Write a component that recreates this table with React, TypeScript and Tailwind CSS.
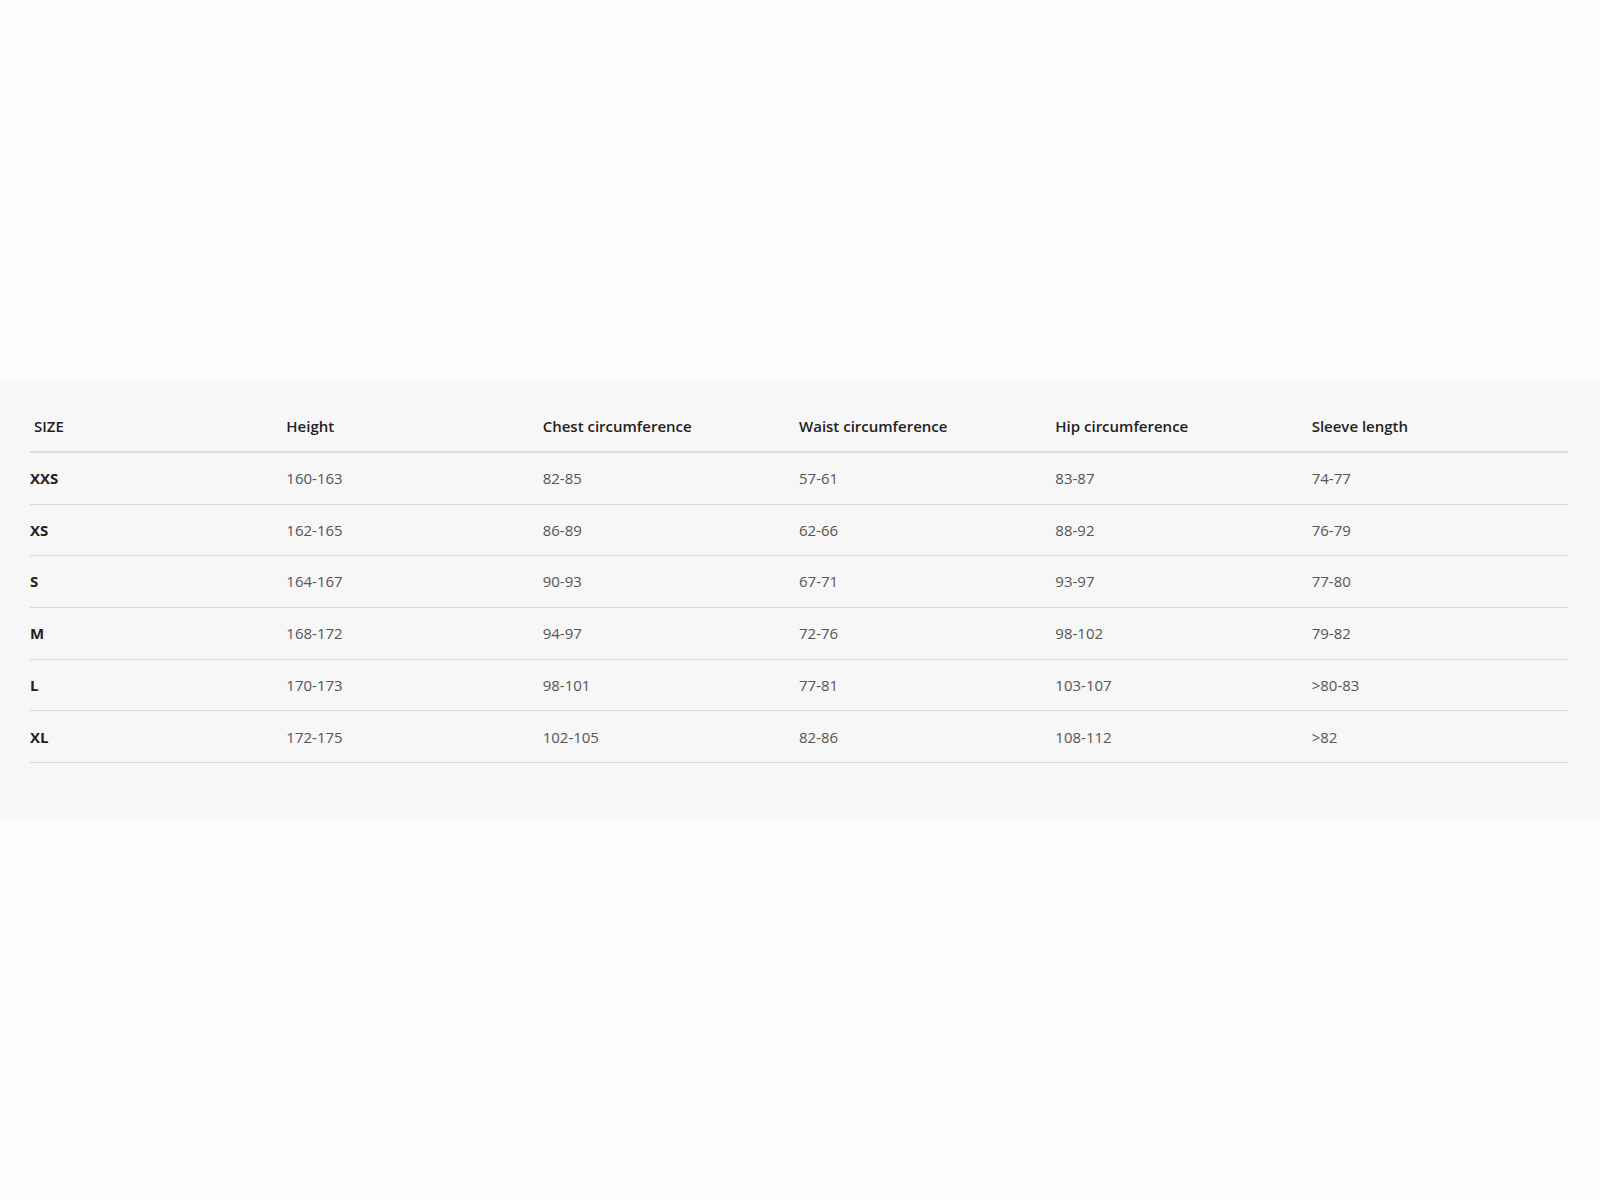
import React from "react";

const headers = ["SIZE", "Height", "Chest circumference", "Waist circumference", "Hip circumference", "Sleeve length"];
const rows = [
  ["XXS", "160-163", "82-85", "57-61", "83-87", "74-77"],
  ["XS", "162-165", "86-89", "62-66", "88-92", "76-79"],
  ["S", "164-167", "90-93", "67-71", "93-97", "77-80"],
  ["M", "168-172", "94-97", "72-76", "98-102", "79-82"],
  ["L", "170-173", "98-101", "77-81", "103-107", ">80-83"],
  ["XL", "172-175", "102-105", "82-86", "108-112", ">82"],
];

export default function App() {
  return (
    <div
      className="min-h-[1200px] w-full bg-[#fdfdfd] pt-[380px]"
      style={{ fontFamily: '"Open Sans", "Liberation Sans", sans-serif' }}
    >
      <div className="h-[441px] w-full bg-[#f7f7f7] pl-[30px] pr-[32px] pt-[21px]">
        <div className="grid h-[52px] grid-cols-6 items-center border-b-2 border-[#dedede] text-[15px] font-semibold text-[#222]">
          {headers.map((h, i) => (
            <div key={h} className={i === 0 ? "pl-[4px]" : ""}>
              {h}
            </div>
          ))}
        </div>
        {rows.map((r) => (
          <div
            key={r[0]}
            className="grid h-[51.7px] grid-cols-6 items-center border-b border-[#d9d9d9] text-[15px] text-[#555]"
          >
            {r.map((c, i) => (
              <div key={i} className={i === 0 ? "font-bold text-[#222]" : ""}>
                {c}
              </div>
            ))}
          </div>
        ))}
      </div>
    </div>
  );
}
